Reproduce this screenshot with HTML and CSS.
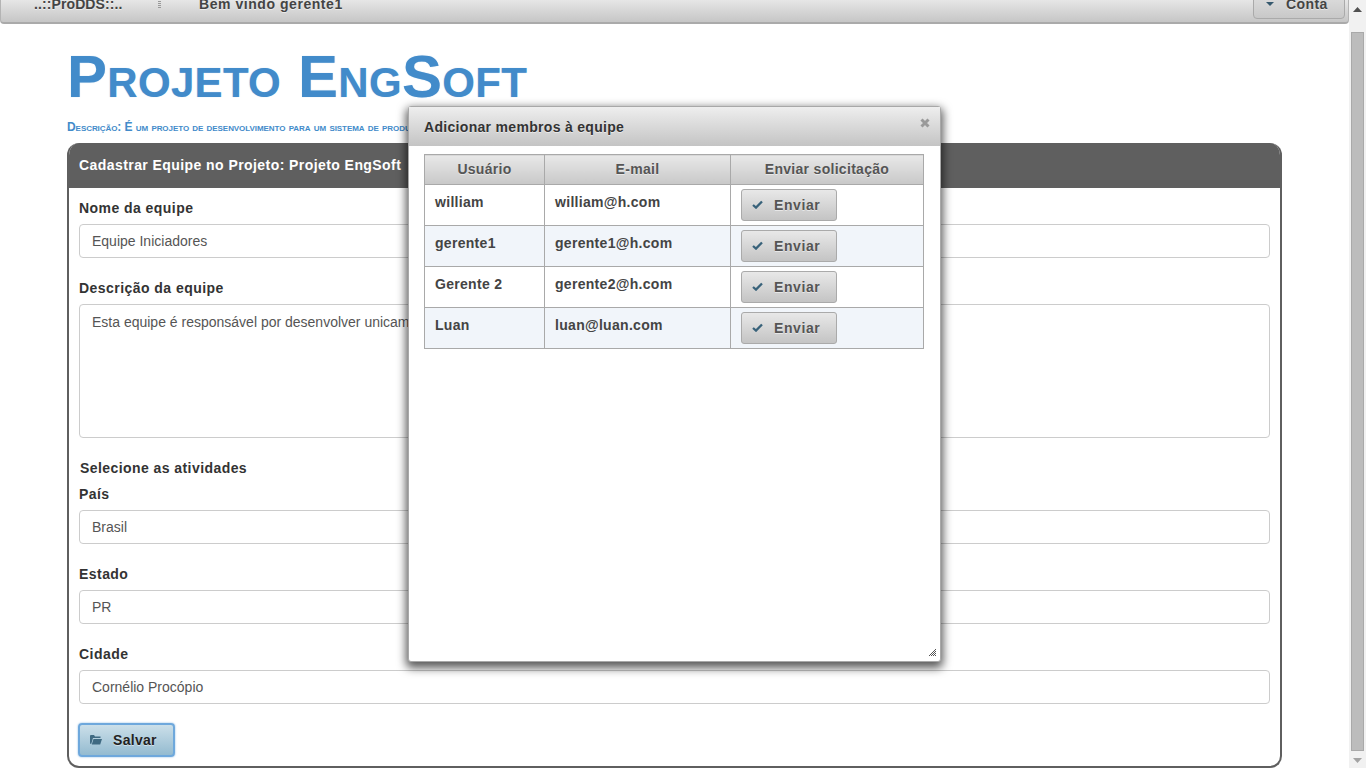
FILE: index.html
```html
<!DOCTYPE html>
<html lang="pt-BR">
<head>
<meta charset="utf-8">
<title>Projeto EngSoft</title>
<link rel="stylesheet" href="styles.css">
</head>
<body>
<div class="viewport">
  <div class="page">
    <header class="topbar">
      <span class="brand">..::ProDDS::..</span>
      <span class="grip"></span>
      <span class="welcome">Bem vindo gerente1</span>
      <button class="account" type="button">
        <svg class="caret" width="8" height="4" viewBox="0 0 8 4"><path d="M0 0h8L4 4z"/></svg>
        Conta
      </button>
    </header>
    <main class="content">
      <h1 class="title">Projeto EngSoft</h1>
      <p class="desc">Descrição: É um projeto de desenvolvimento para um sistema de produção de software</p>
      <section class="panel">
        <h2 class="panel-head">Cadastrar Equipe no Projeto: Projeto EngSoft</h2>
        <form class="panel-body">
          <label class="lbl">Nome da equipe</label>
          <div class="field">Equipe Iniciadores</div>
          <label class="lbl">Descrição da equipe</label>
          <div class="field area">Esta equipe é responsável por desenvolver unicamente as atividades iniciais</div>
          <div class="sel">Selecione as atividades</div>
          <label class="lbl lbl-tight">País</label>
          <div class="field">Brasil</div>
          <label class="lbl">Estado</label>
          <div class="field">PR</div>
          <label class="lbl">Cidade</label>
          <div class="field">Cornélio Procópio</div>
          <button class="save" type="button">
            <svg width="12" height="10" viewBox="0 0 12 10"><path fill="#3f6a82" d="M1 0h3l1 1.500h5.500V3H3L1.200 9H1a1 1 0 0 1-1-1V1a1 1 0 0 1 1-1z"/><path fill="#3f6a82" d="M3.500 4H12l-1.800 5.500H1.800z"/></svg>
            Salvar
          </button>
        </form>
      </section>
    </main>
  </div>
  <div class="scrollbar">
    <svg class="arrow" width="9" height="5" viewBox="0 0 9 5"><path d="M4.500 0L9 5H0z"/></svg>
    <div class="thumb"></div>
    <svg class="arrow" width="9" height="5" viewBox="0 0 9 5"><path d="M0 0h9L4.500 5z"/></svg>
  </div>
  <div class="modal">
    <div class="modal-head">
      <span>Adicionar membros à equipe</span>
      <svg class="close" width="10" height="10" viewBox="0 0 10 10"><path d="M1.500 1.500l7 7M8.500 1.500l-7 7" stroke="#9a9a9a" stroke-width="3" fill="none"/></svg>
    </div>
    <div class="modal-body">
      <table class="members">
        <thead>
          <tr><th class="c1">Usuário</th><th class="c2">E-mail</th><th class="c3">Enviar solicitação</th></tr>
        </thead>
        <tbody>
          <tr><td>william</td><td>william@h.com</td><td><button class="send" type="button"><svg width="11" height="9" viewBox="0 0 11 9"><path d="M1 5l3 2.600L10 1.500" stroke="#38627a" stroke-width="2.300" fill="none"/></svg>Enviar</button></td></tr>
          <tr class="alt"><td>gerente1</td><td>gerente1@h.com</td><td><button class="send" type="button"><svg width="11" height="9" viewBox="0 0 11 9"><path d="M1 5l3 2.600L10 1.500" stroke="#38627a" stroke-width="2.300" fill="none"/></svg>Enviar</button></td></tr>
          <tr><td>Gerente 2</td><td>gerente2@h.com</td><td><button class="send" type="button"><svg width="11" height="9" viewBox="0 0 11 9"><path d="M1 5l3 2.600L10 1.500" stroke="#38627a" stroke-width="2.300" fill="none"/></svg>Enviar</button></td></tr>
          <tr class="alt"><td>Luan</td><td>luan@luan.com</td><td><button class="send" type="button"><svg width="11" height="9" viewBox="0 0 11 9"><path d="M1 5l3 2.600L10 1.500" stroke="#38627a" stroke-width="2.300" fill="none"/></svg>Enviar</button></td></tr>
        </tbody>
      </table>
    </div>
    <svg class="resize" width="9" height="9" viewBox="0 0 9 9" shape-rendering="crispEdges">
      <defs>
        <pattern id="checker" width="2" height="2" patternUnits="userSpaceOnUse">
          <rect width="1" height="1" fill="#555"/>
          <rect x="1" y="1" width="1" height="1" fill="#555"/>
        </pattern>
      </defs>
      <polygon points="9,0 9,9 0,9" fill="url(#checker)"/>
    </svg>
  </div>
</div>
</body>
</html>
```
FILE: styles.css
```css
* { box-sizing: border-box; }
html, body { margin: 0; padding: 0; height: 100%; overflow: hidden; background: #fff; }
body { font-family: "Liberation Sans", Arial, sans-serif; color: #333; font-size: 14px; }
.viewport { position: relative; display: flex; width: 1366px; height: 768px; overflow: hidden; }
.page { width: 1349px; height: 768px; overflow: hidden; flex: none; }

.topbar {
  display: flex; align-items: flex-end; height: 24px; padding-bottom: 12px;
  background: linear-gradient(#e6e6e6, #c6c6c6);
  border: 1px solid #b4b4b4; border-top: 0; border-bottom: 2px solid #aaa;
  border-radius: 0 0 4px 4px; position: relative;
  font-weight: bold; color: #444; text-shadow: 0 1px 0 rgba(255,255,255,.5);
}
.brand { margin-left: 33px; width: 124px; line-height: 14px; margin-bottom: -1px; letter-spacing: .1px; }
.grip { width: 3px; height: 14px; margin-right: 38px; margin-bottom: 1px;
  background: repeating-linear-gradient(#999 0 1px, transparent 1px 2px); }
.welcome { line-height: 14px; margin-bottom: -1px; letter-spacing: .55px; }
.account {
  position: absolute; right: 3px; top: -6px; width: 92px; height: 25px;
  display: flex; align-items: center; gap: 12px;
  background: linear-gradient(#dedede, #c8c8c8); border: 1px solid #aaa; border-radius: 4px;
  font: bold 14px "Liberation Sans", Arial, sans-serif; color: #444; padding: 0 0 5px 12px;
  letter-spacing: .4px; text-shadow: 0 1px 0 rgba(255,255,255,.5);
}
.caret { fill: #36596e; }

.content { padding: 0 67px; }
.title {
  margin: 20px 0 0; font: small-caps bold 60px/66px "Liberation Sans", Arial, sans-serif;
  color: #428bca; text-shadow: 0 0 1px rgba(66,139,202,.4); white-space: nowrap; letter-spacing: .3px;
}
.desc {
  margin: 10px 0 0; font: small-caps bold 12px/14px "Liberation Sans", Arial, sans-serif;
  color: #428bca; height: 15px; white-space: nowrap; overflow: hidden; letter-spacing: -.06px;
}
.panel {
  margin-top: 8px; width: 1215px; height: 625px; border: 2px solid #5f5f5f; border-top: 0;
  border-radius: 12px; overflow: hidden;
}
.panel-head {
  margin: 0; height: 45px; background: #5f5f5f; color: #fff;
  font: bold 14px/45px "Liberation Sans", Arial, sans-serif; padding-left: 10px; letter-spacing: .43px;
}
.panel-body { padding: 0 10px; display: flex; flex-direction: column; align-items: flex-start; }
.lbl { display: block; font-weight: bold; line-height: 20px; margin: 0 0 6px; color: #333; letter-spacing: .45px; }
.panel-body .lbl:first-child { margin-top: 10px; }
.panel-body .lbl-tight { margin-top: 6px; }
.field {
  width: 100%; height: 34px; border: 1px solid #ccc; border-radius: 4px;
  padding: 0 12px; line-height: 32px; color: #555; background: #fff; flex: none; margin-bottom: 20px;
}
.field.area { height: 134px; padding-top: 1px; }
.sel { font-weight: bold; line-height: 20px; margin: 0 0 0 1px; color: #333; letter-spacing: .43px; }
.save {
  display: flex; align-items: center; gap: 11px; width: 97px; height: 34px; margin: -1px 0 0 -1px; padding: 0 0 0 10px;
  background: linear-gradient(#cbdfe9, #94bbd0); border: 2px solid #6ea8dc; border-radius: 4px;
  font: bold 14px "Liberation Sans", Arial, sans-serif; color: #222; box-shadow: 0 0 2px #7fb2e0;
  letter-spacing: .3px; text-shadow: 0 1px 0 rgba(255,255,255,.5);
}

.scrollbar { width: 17px; height: 768px; background: #f1f1f1; display: flex; flex-direction: column; align-items: center; flex: none; padding-top: 7px; }
.arrow { fill: #505050; flex: none; }
.scrollbar .arrow:last-child { fill: #a3a3a3; margin-top: 7px; }
.thumb { width: 13px; height: 719px; margin-top: 20px; background: #bcbcbc; border: 1px solid #a9a9a9; flex: none; }

.modal {
  position: absolute; left: 408px; top: 106px; width: 533px; height: 556px;
  background: #fff; border: 1px solid #a8a8a8; border-radius: 3px;
  box-shadow: 0 4px 10px 2px rgba(0,0,0,.65);
}
.modal-head {
  position: relative; height: 39px; padding-left: 15px;
  background: linear-gradient(#eeeeee, #c4c4c4);
  font-weight: bold; line-height: 40px; color: #333; letter-spacing: .31px; text-shadow: 0 1px 0 rgba(255,255,255,.5);
}
.close { position: absolute; right: 10px; top: 11px; }
.modal-body { padding: 8px 15px 0; }
.members { border-collapse: collapse; table-layout: fixed; width: 499px; color: #444; }
.members th, .members td { border: 1px solid #a9a9a9; font-weight: bold; font-size: 14px; letter-spacing: .3px; }
.members th {
  height: 30px; padding: 0 0 2px; text-align: center; color: #555;
  background: linear-gradient(#e8e8e8, #c8c8c8); text-shadow: 0 1px 0 rgba(255,255,255,.5);
}
.c1 { width: 120px; }
.c2 { width: 186px; }
.c3 { width: 193px; }
.members td { height: 41px; padding: 0 10px 6px; vertical-align: middle; }
.members td:last-child { padding: 0 10px; }
.alt td { background: #f1f5fa; }
.send {
  display: flex; align-items: center; gap: 11px; width: 96px; height: 32px; padding: 0 0 0 10px; margin-bottom: 1px;
  background: linear-gradient(#e8e8e8, #c4c4c4); border: 1px solid #aaa; border-radius: 3px;
  font: bold 14px "Liberation Sans", Arial, sans-serif; color: #555; letter-spacing: .6px; text-shadow: 0 1px 0 rgba(255,255,255,.5);
}
.resize { position: absolute; right: 4px; bottom: 5px; }
```
